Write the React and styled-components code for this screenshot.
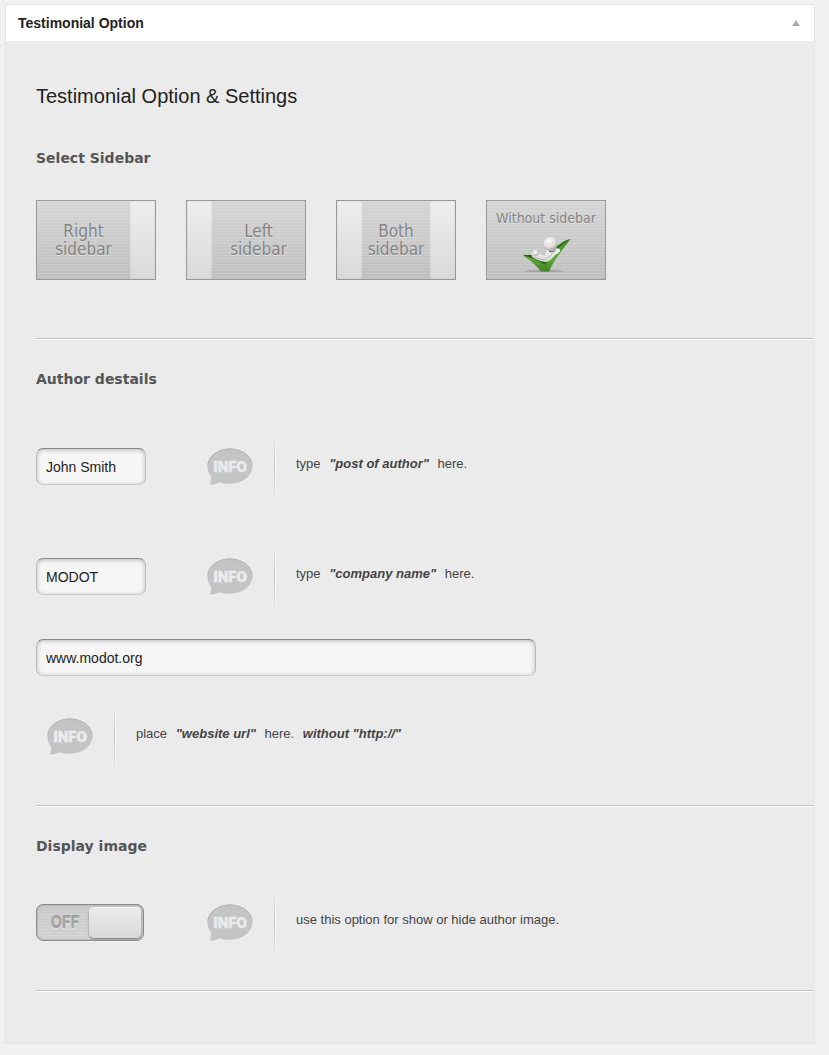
import React, { useState } from 'react';
import styled, { createGlobalStyle } from 'styled-components';


const GlobalStyle = createGlobalStyle`
  * {
    box-sizing: border-box;
  }
  body {
    margin: 0;
    background: #f1f1f1;
    color: #444;
    font-family: "Liberation Sans", Arial, sans-serif;
    font-size: 13px;
  }
`;

const Panel = styled.section`
  margin: 4px 14px 11px 5px;
  border: 1px solid #e5e5e5;
  background: #ebebeb;
  box-shadow: 0 1px 1px rgba(0, 0, 0, 0.04);
`;

const PanelHeader = styled.header`
  display: flex;
  align-items: center;
  justify-content: space-between;
  height: 36px;
  padding: 0 14px 0 12px;
  background: #fff;
`;

const PanelTitle = styled.h3`
  margin: 0;
  font-size: 14px;
  line-height: 20px;
  color: #222;
`;

const Toggle = styled.button`
  display: flex;
  padding: 0;
  border: none;
  background: none;
  cursor: pointer;
`;

const PanelBody = styled.div`
  padding: 43px 0 51px 30px;
`;

const Heading = styled.h2`
  margin: 0 0 40px;
  font-size: 20px;
  font-weight: 400;
  line-height: 24px;
  color: #222;
`;

const Section = styled.section`
  padding-bottom: ${({ $bottom }) => $bottom}px;
  border-bottom: 1px solid #c4c4c4;
  box-shadow: 0 1px 0 #fff;
  & + & {
    padding-top: 30px;
  }
`;

const SectionTitle = styled.h4`
  margin: 0 0 ${({ $gap }) => $gap}px;
  font-family: "DejaVu Sans", Verdana, sans-serif;
  font-size: 14px;
  font-weight: 700;
  line-height: 20px;
  color: #555;
`;

const Choices = styled.div`
  display: flex;
  flex-wrap: wrap;
  gap: 30px;
`;

const Choice = styled.label`
  position: relative;
  display: flex;
  width: 120px;
  height: 80px;
  border: 1px solid #999;
  background:
    repeating-linear-gradient(rgba(255, 255, 255, 0.12) 0 1px, transparent 1px 3px),
    linear-gradient(#d6d6d6, #bfbfbf);
  font-family: "DejaVu Sans Condensed", "DejaVu Sans", Tahoma, sans-serif;
  color: #858585;
  text-shadow: 0 1px 0 #e2e2e2;
  cursor: pointer;
`;

const HiddenInput = styled.input`
  position: absolute;
  inset: 0;
  margin: 0;
  opacity: 0;
  cursor: pointer;
`;

const Side = styled.span`
  flex: 0 0 25px;
  background: linear-gradient(#eee, #d9d9d9);
  box-shadow: inset 0 0 1px #aaa;
`;

const ChoiceText = styled.span`
  flex: 1;
  padding-top: 21px;
  font-size: 17px;
  line-height: 18px;
  text-align: center;
`;

const WideChoiceText = styled.span`
  display: flex;
  flex: 1;
  flex-direction: column;
  align-items: center;
  padding-top: 8px;
  font-size: 14px;
  line-height: 18px;
  white-space: nowrap;
  svg {
    margin-top: 8px;
  }
`;

const Row = styled.div`
  display: grid;
  grid-template-columns: 160px 1fr;
  align-items: center;
  & + & {
    margin-top: 41px;
  }
`;

const TextInput = styled.input`
  width: ${({ $wide }) => ($wide ? '500px' : '110px')};
  max-width: 100%;
  height: 37px;
  padding: 0 9px;
  border: 1px solid #bbb;
  border-top-color: #888;
  border-bottom-color: #ccc;
  border-radius: 7px;
  outline: none;
  background: #f6f6f6;
  box-shadow: inset 0 1px 4px rgba(0, 0, 0, 0.25);
  font-family: inherit;
  font-size: 14px;
  color: #222;
`;

const UrlField = styled.div`
  margin: 28px 0 26px;
  line-height: 0;
`;

const InfoBox = styled.div`
  display: flex;
  align-items: center;
  height: 69px;
  padding-left: 11px;
`;

const InfoDivider = styled.span`
  width: 2px;
  height: 69px;
  margin: 0 20px 0 21px;
  background:
    linear-gradient(rgba(195, 195, 195, 0), #c3c3c3, rgba(195, 195, 195, 0)) left / 1px 100% no-repeat,
    linear-gradient(rgba(255, 255, 255, 0), #fff, rgba(255, 255, 255, 0)) right / 1px 100% no-repeat;
`;

const InfoText = styled.p`
  margin: 0;
  padding-bottom: 6px;
  line-height: 18px;
  em {
    margin: 0 5px;
    font-weight: 700;
  }
`;

const Switch = styled.label`
  position: relative;
  display: flex;
  flex-direction: ${({ $on }) => ($on ? 'row-reverse' : 'row')};
  align-items: center;
  width: 108px;
  height: 37px;
  padding: 0 2px 1px;
  border: 1px solid #8c8c8c;
  border-radius: 7px;
  background:
    repeating-linear-gradient(rgba(255, 255, 255, 0.12) 0 1px, transparent 1px 3px),
    linear-gradient(#cacaca, #d2d2d2);
  box-shadow: inset 0 0 2px #888, 0 1px 0 #f6f6f6;
  cursor: pointer;
`;

const SwitchText = styled.span`
  flex: 1;
  padding-left: 2px;
  font-family: Roboto, sans-serif;
  font-size: 16px;
  font-weight: 500;
  text-align: center;
  color: #a6a6a6;
  text-shadow: 0 -1px 0 #999, 0 1px 0 #e2e2e2;
`;

const Knob = styled.span`
  width: 52px;
  height: 31px;
  border-radius: 5px;
  background: linear-gradient(#ebebeb, #dadada);
  box-shadow: 0 1px 2px #777, inset 0 1px 0 #f5f5f5;
`;

const InfoIcon = () => (
  <svg width="46" height="38" viewBox="0 0 46 38" aria-hidden="true">
    <path
      d="M23 .5C10.500.5.5 8 .5 18c0 4.500 1.300 7.700 3.500 10.500.2 3-.5 5.500-1.200 8 4.500 0 7.500-.8 9.500-2.300 3.200 1 6.600 1.500 10.700 1.500 12.500 0 22.500-7.600 22.500-17.600S35.500.5 23 .5z"
      fill="#c4c4c4"
    />
    <path d="M.8 17C1.500 8 11 1 23 1s21.500 7 22.200 16" fill="none" stroke="#b6b6b6" strokeWidth="1" />
    <text
      x="23"
      y="24"
      textAnchor="middle"
      fontFamily="Roboto, sans-serif"
      fontSize="15"
      fontWeight="900"
      fill="#ebebeb"
      stroke="#ebebeb"
      strokeWidth="0.5"
    >
      INFO
    </text>
  </svg>
);

const CheckFigure = () => (
  <svg width="50" height="40" viewBox="0 0 50 40" aria-hidden="true">
    <defs>
      <linearGradient id="leaf" x1="0" y1="0" x2="0" y2="1">
        <stop offset="0" stopColor="#3f8a22" />
        <stop offset="0.6" stopColor="#5fa83a" />
        <stop offset="1" stopColor="#3d8522" />
      </linearGradient>
      <linearGradient id="limbs" x1="0" y1="0" x2="0" y2="1">
        <stop offset="0" stopColor="#f6f6f6" />
        <stop offset="1" stopColor="#d6d6d6" />
      </linearGradient>
      <radialGradient id="skin" cx="0.4" cy="0.3" r="0.75">
        <stop offset="0" stopColor="#fafafa" />
        <stop offset="0.6" stopColor="#dcdcdc" />
        <stop offset="1" stopColor="#929292" />
      </radialGradient>
    </defs>
    <ellipse cx="23" cy="36" rx="20" ry="1" fill="#888" opacity="0.6" />
    <path d="M2 20.500c9-1.500 17 1 22 7C27 20 37 7 49.500 4 44 12 34 23 28 36.500h-8C16 31 9 25 2 20.500z" fill="url(#leaf)" />
    <path d="M2 20.500c9-1.500 17 1 22 7l-.5 2C17 25 10 22.500 2 20.500z" fill="#245f15" />
    <path d="M49.500 4C38 7 28 18 24 27.500v3C29 20 39 10 49.500 4z" fill="#2c6f1b" />
    <path
      d="M27 14c4-1 9-1 12 0 1 3-3 5-5 6-2 3-5 6-9 7-5-.5-9-2-14-5l-.5-4 4-1c3 1 6 3 9 4 1-2 1-5 3.500-7z"
      fill="url(#limbs)"
    />
    <circle cx="14.500" cy="18" r="3" fill="url(#skin)" />
    <path d="M12 21.500c4 1.500 8 3.500 12 3 3-1 6-4 8-7" stroke="#a4a4a4" strokeWidth="0.7" fill="none" />
    <path d="M28 16.500c2.500.8 5.500 0 7-2" stroke="#555" strokeWidth="1" fill="none" />
    <circle cx="29.500" cy="9" r="7" fill="url(#skin)" />
  </svg>
);

const Info = ({ children }) => (
  <InfoBox>
    <InfoIcon />
    <InfoDivider />
    <InfoText>{children}</InfoText>
  </InfoBox>
);

const SidebarChoice = ({ value, selected, onSelect, left, right, children }) => (
  <Choice>
    <HiddenInput
      type="radio"
      name="sidebar"
      value={value}
      checked={selected === value}
      onChange={() => onSelect(value)}
    />
    {left && <Side />}
    {children}
    {right && <Side />}
  </Choice>
);

const App = () => {

  const [open, setOpen] = useState(true);
  const [sidebar, setSidebar] = useState('none');
  const [showImage, setShowImage] = useState(false);

  return (
    <>
      <GlobalStyle />
      <Panel>
        <PanelHeader>
          <PanelTitle>Testimonial Option</PanelTitle>
          <Toggle type="button" aria-label="Toggle panel" aria-expanded={open} onClick={() => setOpen(!open)}>
            <svg width="8" height="6" viewBox="0 0 8 6"><path d="M4 0l4 6H0z" fill="#aaa" /></svg>
          </Toggle>
        </PanelHeader>
        {open && (
          <PanelBody>
            <Heading>Testimonial Option &amp; Settings</Heading>

            <Section $bottom={58}>
              <SectionTitle $gap={32}>Select Sidebar</SectionTitle>
              <Choices>
                <SidebarChoice value="right" selected={sidebar} onSelect={setSidebar} right>
                  <ChoiceText>Right<br />sidebar</ChoiceText>
                </SidebarChoice>
                <SidebarChoice value="left" selected={sidebar} onSelect={setSidebar} left>
                  <ChoiceText>Left<br />sidebar</ChoiceText>
                </SidebarChoice>
                <SidebarChoice value="both" selected={sidebar} onSelect={setSidebar} left right>
                  <ChoiceText>Both<br />sidebar</ChoiceText>
                </SidebarChoice>
                <SidebarChoice value="none" selected={sidebar} onSelect={setSidebar}>
                  <WideChoiceText>Without sidebar<CheckFigure /></WideChoiceText>
                </SidebarChoice>
              </Choices>
            </Section>

            <Section $bottom={34}>
              <SectionTitle $gap={43}>Author destails</SectionTitle>
              <Row>
                <TextInput aria-label="Post of author" defaultValue="John Smith" />
                <Info>type <em>"post of author"</em> here.</Info>
              </Row>
              <Row>
                <TextInput aria-label="Company name" defaultValue="MODOT" />
                <Info>type <em>"company name"</em> here.</Info>
              </Row>
              <UrlField>
                <TextInput $wide aria-label="Website url" defaultValue="www.modot.org" />
              </UrlField>
              <Info>place <em>"website url"</em> here. <em>without "http://"</em></Info>
            </Section>

            <Section $bottom={33}>
              <SectionTitle $gap={32}>Display image</SectionTitle>
              <Row>
                <Switch $on={showImage}>
                  <HiddenInput
                    type="checkbox"
                    aria-label="Display image"
                    checked={showImage}
                    onChange={() => setShowImage(!showImage)}
                  />
                  <SwitchText>{showImage ? 'ON' : 'OFF'}</SwitchText>
                  <Knob />
                </Switch>
                <Info>use this option for show or hide author image.</Info>
              </Row>
            </Section>
          </PanelBody>
        )}
      </Panel>
    </>
  );
};

export default App;
